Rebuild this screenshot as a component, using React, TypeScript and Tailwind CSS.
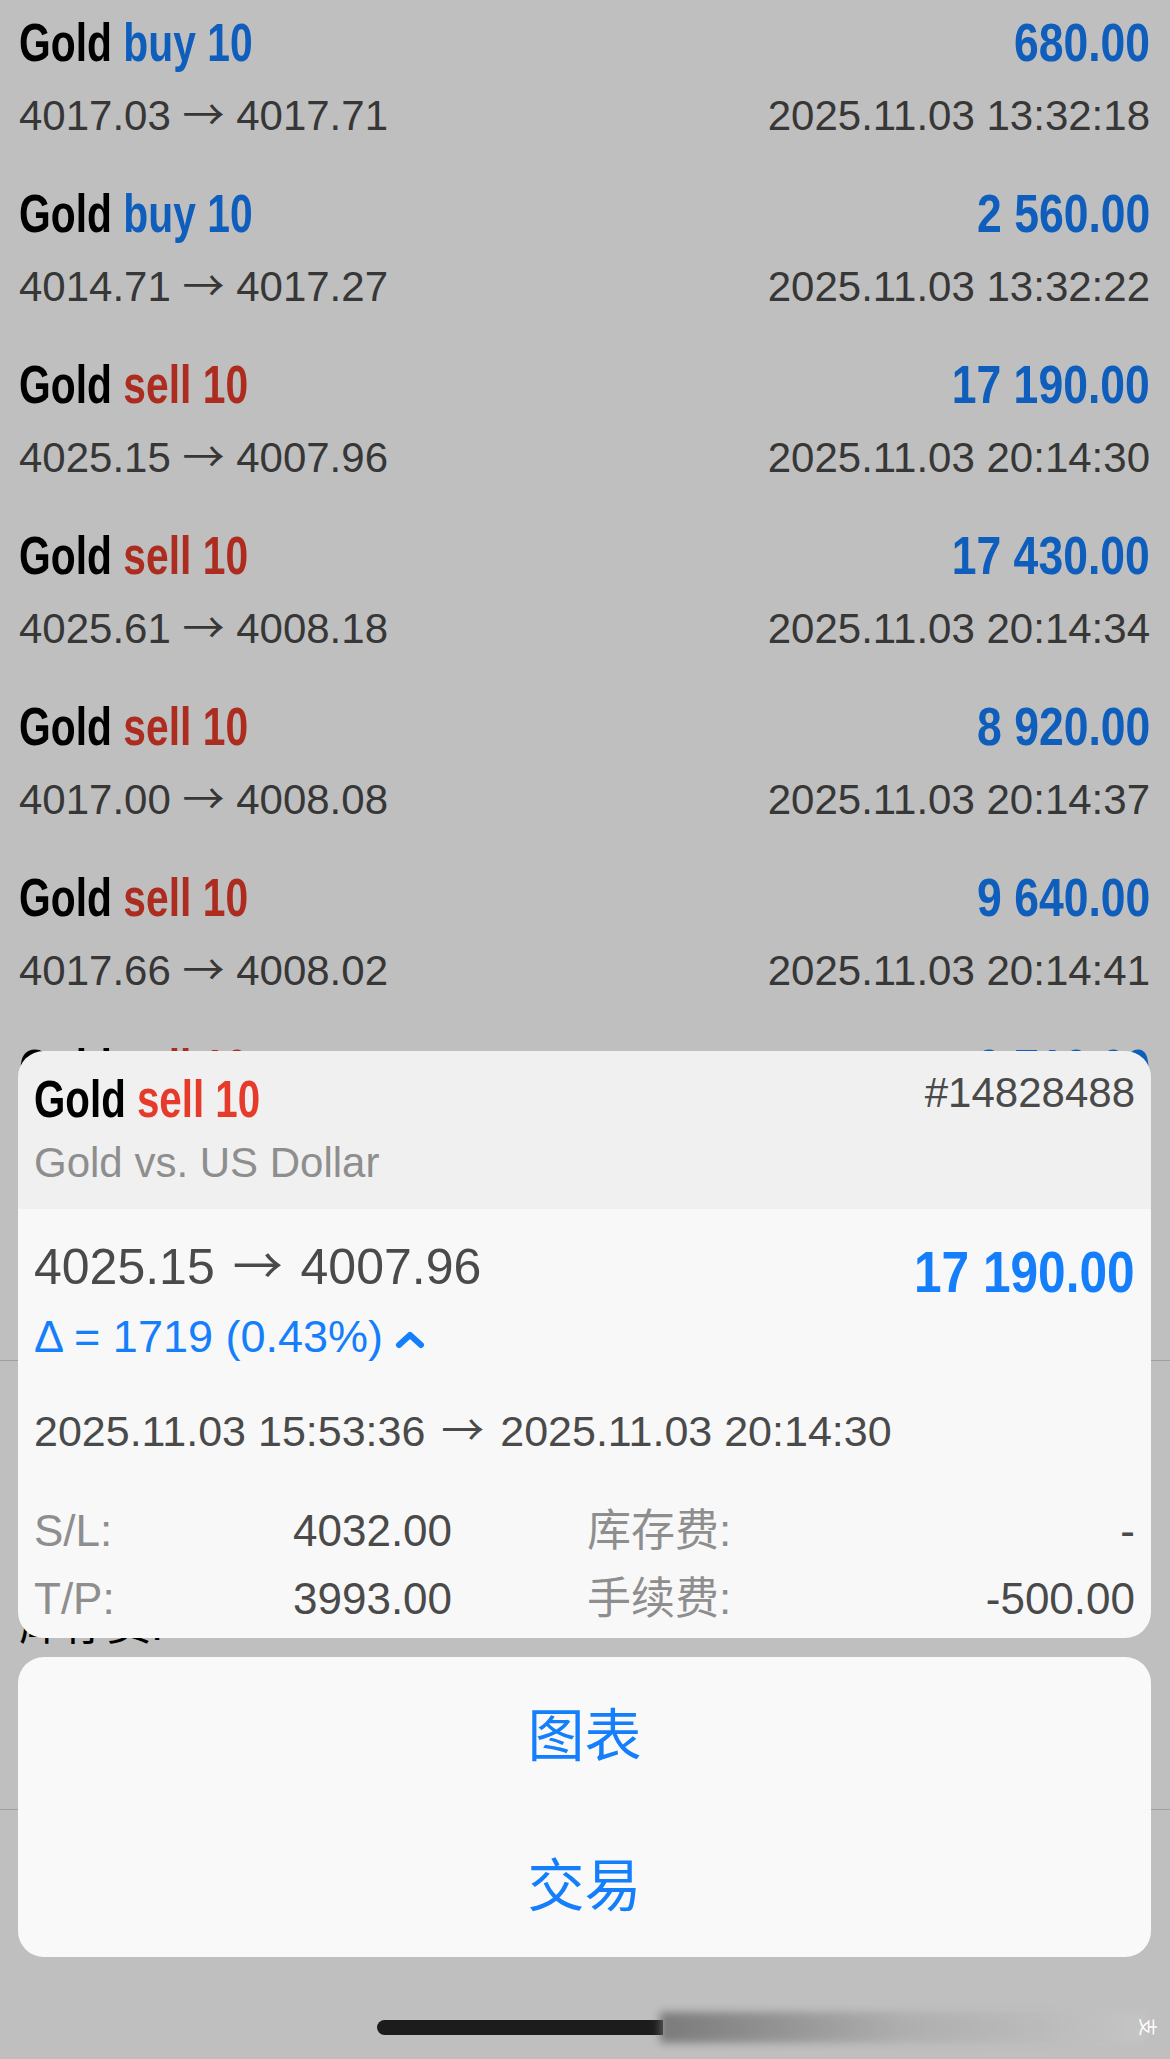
const bold = "font-['Liberation_Sans',sans-serif] font-bold inline-block";
const sans = "font-['Liberation_Sans','Noto_Sans_CJK_SC',sans-serif]";
const cjk = "font-['Noto_Sans_CJK_SC',sans-serif]";

type Deal = {
  side: "buy" | "sell";
  from: string;
  to: string;
  profit: string;
  time: string;
};

const deals: Deal[] = [
  { side: "buy", from: "4017.03", to: "4017.71", profit: "680.00", time: "2025.11.03 13:32:18" },
  { side: "buy", from: "4014.71", to: "4017.27", profit: "2 560.00", time: "2025.11.03 13:32:22" },
  { side: "sell", from: "4025.15", to: "4007.96", profit: "17 190.00", time: "2025.11.03 20:14:30" },
  { side: "sell", from: "4025.61", to: "4008.18", profit: "17 430.00", time: "2025.11.03 20:14:34" },
  { side: "sell", from: "4017.00", to: "4008.08", profit: "8 920.00", time: "2025.11.03 20:14:37" },
  { side: "sell", from: "4017.66", to: "4008.02", profit: "9 640.00", time: "2025.11.03 20:14:41" },
];

function Arrow({ wide }: { wide?: boolean }) {
  return <span className={`${cjk} ${wide ? "mx-[4px]" : ""}`}>→</span>;
}

function DealRow({ deal, hidden }: { deal: Deal; hidden?: boolean }) {
  return (
    <div className="h-[171px] pt-[14px] pl-[19px] pr-[20px] flex flex-col">
      <div className="flex justify-between items-baseline">
        <span className={`${bold} origin-left scale-x-[0.77] text-[53px] leading-[58px] text-black`}>
          Gold{" "}
          <span className={deal.side === "buy" ? "text-[#157efb]" : "text-[#e63b2b]"}>
            {deal.side} 10
          </span>
        </span>
        <span className={`${bold} origin-right scale-x-[0.84] text-[53px] leading-[58px] text-[#157efb]`}>
          {deal.profit}
        </span>
      </div>
      {!hidden && (
        <div className={`${sans} flex justify-between items-baseline mt-[15px] text-[42px] leading-[50px] text-[#4a4a4a]`}>
          <span>
            {deal.from} <Arrow /> {deal.to}
          </span>
          <span>{deal.time}</span>
        </div>
      )}
    </div>
  );
}

function ChevronUp() {
  return (
    <svg width="30" height="18" viewBox="0 0 30 18" className="ml-[12px] mt-[6px]">
      <path d="M4 14 L15 4 L26 14" fill="none" stroke="#157efb" strokeWidth="6" strokeLinecap="round" strokeLinejoin="round" />
    </svg>
  );
}

function DetailCard() {
  return (
    <div className="rounded-[26px] overflow-hidden">
      <div className="bg-[#f0f0f0] h-[158px] px-4 pt-[18px] flex justify-between items-start">
        <div className="flex flex-col mt-[2px]">
          <span className={`${bold} origin-left scale-x-[0.79] text-[51px] leading-[58px] text-black`}>
            Gold <span className="text-[#e63b2b]">sell 10</span>
          </span>
          <span className={`${sans} mt-[10px] text-[42px] leading-[48px] text-[#8e8e8e]`}>Gold vs. US Dollar</span>
        </div>
        <span className={`${sans} text-[42px] leading-[48px] text-[#4a4a4a]`}>#14828488</span>
      </div>
      <div className="bg-[#f8f8f8] h-[429px] px-4 pt-[25px] flex flex-col">
        <div className="flex justify-between items-start">
          <div className="flex flex-col">
            <span className={`${sans} text-[50px] leading-[56px] text-[#4a4a4a]`}>
              4025.15 <Arrow wide /> 4007.96
            </span>
            <div className={`${sans} mt-[16px] flex items-center text-[45px] leading-[52px] text-[#157efb]`}>
              <span>Δ = 1719 (0.43%)</span>
              <ChevronUp />
            </div>
          </div>
          <span className={`${bold} origin-right scale-x-[0.87] mt-[6px] text-[57px] leading-[64px] text-[#157efb]`}>
            17 190.00
          </span>
        </div>
        <div className={`${sans} mt-[39px] text-[43px] leading-[50px] text-[#4a4a4a]`}>
          2025.11.03 15:53:36 <Arrow wide /> 2025.11.03 20:14:30
        </div>
        <div className={`${sans} mt-[49px] grid grid-cols-[259px_294px_1fr_auto] gap-y-[16px] text-[44px] leading-[52px]`}>
          <span className="text-[#8e8e8e]">S/L:</span>
          <span className="text-[#4a4a4a]">4032.00</span>
          <span className="text-[#8e8e8e]">库存费:</span>
          <span className="text-[#4a4a4a] text-right">-</span>
          <span className="text-[#8e8e8e]">T/P:</span>
          <span className="text-[#4a4a4a]">3993.00</span>
          <span className="text-[#8e8e8e]">手续费:</span>
          <span className="text-[#4a4a4a] text-right">-500.00</span>
        </div>
      </div>
    </div>
  );
}

function ActionSheet() {
  return (
    <div className="rounded-[26px] bg-[#f9f9f9] flex flex-col">
      <button className={`${cjk} h-[150px] flex items-center justify-center text-[57px] text-[#157efb]`}>图表</button>
      <button className={`${cjk} h-[150px] flex items-center justify-center text-[57px] text-[#157efb]`}>交易</button>
    </div>
  );
}

export default function App() {
  return (
    <div className="relative w-[1170px] h-[2059px] overflow-hidden bg-white">
      {/* history list underneath */}
      <div className="flex flex-col">
        {deals.map((deal, i) => (
          <DealRow key={i} deal={deal} />
        ))}
        <DealRow
          hidden
          deal={{ side: "sell", from: "", to: "", profit: "9 710.00", time: "" }}
        />
        <div className="h-[163px]" />
        <div className="h-[449px] border-t border-[#d5d5d5] pl-[19px] pt-[238px]">
          <span className={`${sans} text-[44px] leading-[52px] text-black`}>库存费:</span>
        </div>
        <div className="h-[250px] border-t border-[#d5d5d5]" />
      </div>

      {/* dimming layer */}
      <div className="absolute inset-0 bg-black/25" />

      {/* popup */}
      <div className="absolute left-[18px] top-[1051px] w-[1133px] flex flex-col gap-[19px]">
        <DetailCard />
        <ActionSheet />
      </div>

      {/* home indicator */}
      <div className="absolute top-[2020px] left-[377px] w-[286px] h-[15px] rounded-l-full bg-[#1c1c1c]" />
      <div className="absolute top-[2012px] left-[660px] w-[485px] h-[31px] bg-linear-to-r from-[#6a6a6a] via-[#ababab] to-[#c6c6c6] blur-[4px] opacity-80" />
      <span className={`${cjk} absolute top-[2016px] left-[1140px] text-[18px] leading-[22px] text-white rotate-90`}>支</span>
    </div>
  );
}
